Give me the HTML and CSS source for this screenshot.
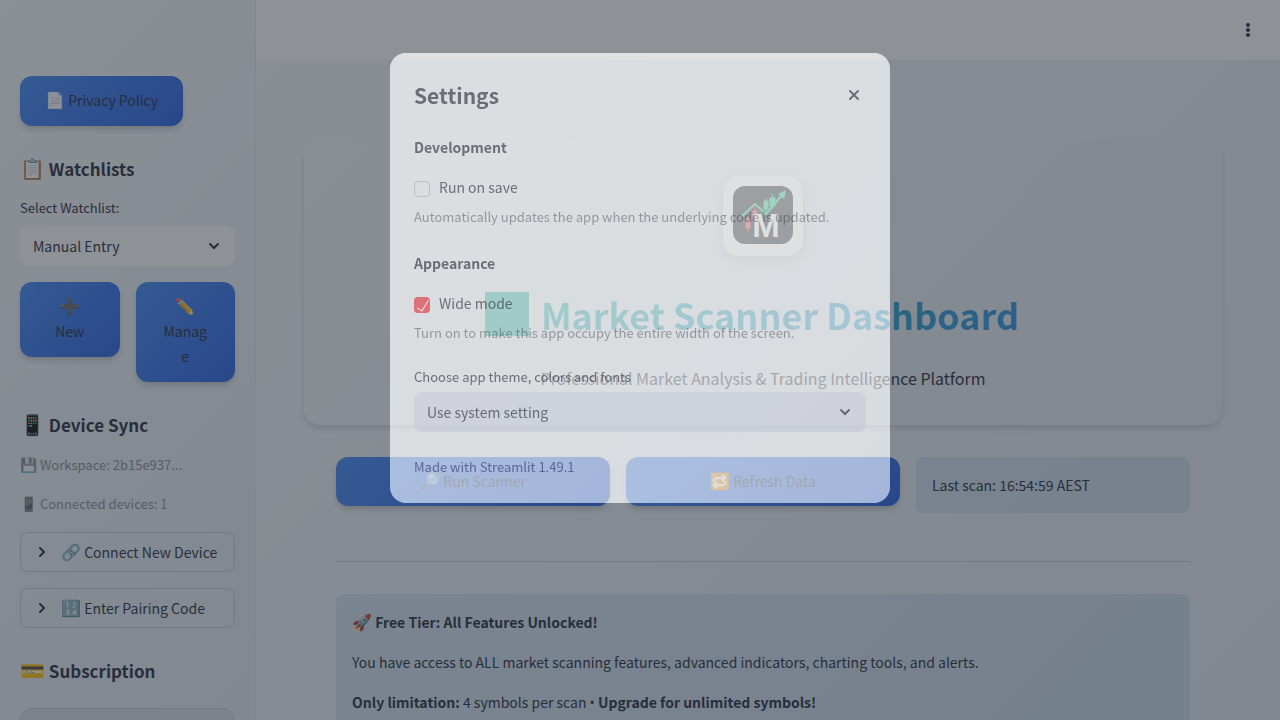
FILE: index.html
```html
<!DOCTYPE html>
<html lang="en">
<head>
<meta charset="utf-8">
<meta name="viewport" content="width=device-width, initial-scale=1">
<title>Market Scanner Dashboard</title>
<link rel="stylesheet" href="styles.css">
</head>
<body>
<div class="app">
  <aside class="sidebar">
    <button class="btn btn-fit" type="button"><span class="emoji">📄</span> Privacy Policy</button>

    <h2 class="side-title"><span class="emoji-lg">📋</span> Watchlists</h2>
    <label class="field-label" for="watchlist">Select Watchlist:</label>
    <div class="select-wrap">
      <select id="watchlist" class="select"><option>Manual Entry</option></select>
      <svg class="chevron" viewBox="0 0 16 16" aria-hidden="true"><path d="M4 6l4 4 4-4"/></svg>
    </div>
    <div class="side-actions">
      <button class="btn btn-narrow" type="button"><span class="emoji">➕</span> New</button>
      <button class="btn btn-narrow" type="button"><span class="emoji">✏️</span> Manage</button>
    </div>

    <h2 class="side-title"><span class="emoji-lg">📱</span> Device Sync</h2>
    <p class="caption"><span class="emoji-sm">💾</span> Workspace: 2b15e937...</p>
    <p class="caption"><span class="emoji-sm">📱</span> Connected devices: 1</p>
    <button class="expander" type="button">
      <svg class="arrow" viewBox="0 0 16 16" aria-hidden="true"><path d="M6 4l4 4-4 4"/></svg>
      <span><span class="emoji">🔗</span> Connect New Device</span>
    </button>
    <button class="expander" type="button">
      <svg class="arrow" viewBox="0 0 16 16" aria-hidden="true"><path d="M6 4l4 4-4 4"/></svg>
      <span><span class="emoji">🔢</span> Enter Pairing Code</span>
    </button>

    <h2 class="side-title"><span class="emoji-lg">💳</span> Subscription</h2>
    <div class="plan-card"></div>
  </aside>

  <div class="page">
    <header class="topbar">
      <button class="menu-btn" type="button" aria-label="Main menu">
        <svg viewBox="0 0 16 16" aria-hidden="true"><circle cx="8" cy="3" r="2"/><circle cx="8" cy="8" r="2"/><circle cx="8" cy="13" r="2"/></svg>
      </button>
    </header>
    <main class="content">
      <section class="hero">
        <div class="logo">
          <svg viewBox="0 0 60 58" role="img" aria-label="Market Scanner logo">
            <rect width="60" height="58" rx="12" fill="#05090f"/>
            <g fill="#e8343c" stroke="#e8343c">
              <path d="M15 29v17M21.500 21v15" stroke-width="1"/>
              <rect x="13" y="33" width="4" height="9"/><rect x="20" y="25" width="4" height="8"/>
            </g>
            <g fill="#10d488" stroke="#10d488">
              <path d="M27.500 27v11M33 12v15M39.500 8v15" stroke-width="1"/>
              <rect x="26" y="30" width="3" height="4"/><rect x="31" y="15" width="4" height="8"/><rect x="37" y="12" width="5" height="8"/>
            </g>
            <text class="logo-letter" x="33" y="51" text-anchor="middle">M</text>
            <path d="M8 31L22 18L33 28L48 10" fill="none" stroke="#10d488" stroke-width="2"/>
            <path d="M53 4L51 13L45 8Z" fill="#10d488"/>
          </svg>
        </div>
        <h1 class="hero-title"><span class="hero-mark"></span>Market Scanner Dashboard</h1>
        <p class="hero-sub">Professional Market Analysis &amp; Trading Intelligence Platform</p>
      </section>

      <div class="inner">
        <div class="actions">
          <button class="btn" type="button"><span class="emoji">🔎</span> Run Scanner</button>
          <button class="btn" type="button"><span class="emoji">🔁</span> Refresh Data</button>
          <p class="info">Last scan: 16:54:59 AEST</p>
        </div>
        <hr class="rule">
        <div class="info info-tier">
          <p><span class="emoji">🚀</span> <strong>Free Tier: All Features Unlocked!</strong></p>
          <p>You have access to ALL market scanning features, advanced indicators, charting tools, and alerts.</p>
          <p><strong>Only limitation:</strong> 4 symbols per scan <span class="bullet">•</span> <strong>Upgrade for unlimited symbols!</strong></p>
        </div>
      </div>
    </main>
  </div>
</div>

<div class="overlay">
  <div class="modal" role="dialog" aria-modal="true" aria-labelledby="modal-title">
    <div class="modal-head">
      <h2 class="modal-title" id="modal-title">Settings</h2>
      <button class="close-btn" type="button" aria-label="Close">
        <svg viewBox="0 0 16 16" aria-hidden="true"><path d="M4 4l8 8M12 4l-8 8"/></svg>
      </button>
    </div>
    <section class="group">
      <h3 class="group-title">Development</h3>
      <label class="check"><input type="checkbox">Run on save</label>
      <p class="hint">Automatically updates the app when the underlying code is updated.</p>
    </section>
    <section class="group">
      <h3 class="group-title">Appearance</h3>
      <label class="check"><input type="checkbox" checked>Wide mode</label>
      <p class="hint">Turn on to make this app occupy the entire width of the screen.</p>
    </section>
    <label class="theme-label" for="theme">Choose app theme, colors and fonts</label>
    <div class="select-wrap">
      <select id="theme" class="select select-theme"><option>Use system setting</option></select>
      <svg class="chevron chevron-soft" viewBox="0 0 16 16" aria-hidden="true"><path d="M4 6l4 4 4-4"/></svg>
    </div>
    <p class="version">Made with Streamlit 1.49.1</p>
  </div>
</div>
</body>
</html>
```

FILE: styles.css
```css
:root {
  --ink: #1b2233;
  --soft-ink: rgba(49, 51, 63, 0.66);
  --line: #c6c9d2;
}

* { box-sizing: border-box; }

body {
  margin: 0;
  height: 100vh;
  overflow: hidden;
  color: var(--ink);
  font-family: "Noto Sans CJK SC", "Noto Sans", sans-serif;
  font-size: 14px;
  line-height: 24px;
}

h1, h2, h3, p { margin: 0; }

button, select, input { font: inherit; color: inherit; }

button { cursor: pointer; }

.emoji { font-size: 16px; line-height: 16px; }
.emoji-sm { font-size: 14px; line-height: 14px; opacity: 0.6; }
.emoji-lg { font-size: 20px; line-height: 20px; }
.bullet { font-family: "Open Sans", sans-serif; }

.app {
  display: flex;
  height: 100vh;
  overflow: hidden;
  background: linear-gradient(135deg, #f8fafc 0%, #e2e8f0 100%);
}

/* Sidebar */
.sidebar {
  flex: none;
  width: 256px;
  padding: 76px 20px 0;
  border-right: 1px solid #e2e5ea;
  background: linear-gradient(135deg, #f8fafc 0%, #e2e8f0 100%);
  overflow: hidden;
}

.btn {
  padding: 12px 24px;
  border: 0;
  border-radius: 12px;
  background: linear-gradient(135deg, #3b82f6 0%, #1f5ae0 100%);
  box-shadow: 0 4px 6px -1px rgba(0, 0, 0, 0.2);
  line-height: 25px;
  overflow-wrap: anywhere;
}

.btn-fit {
  display: block;
  padding: 12px 25px 13px;
}

.btn-narrow { padding: 12px 26px 13px; }

.side-title {
  margin: 31px 0 17px;
  font-size: 17px;
  font-weight: 600;
  line-height: 24px;
  white-space: nowrap;
}

.field-label {
  display: block;
  margin-bottom: 8px;
  font-size: 13px;
  line-height: 20px;
}

.select-wrap { position: relative; }

.select {
  display: block;
  width: 100%;
  height: 40px;
  padding: 0 40px 0 13px;
  border: 0;
  border-radius: 8px;
  background: #fff;
  appearance: none;
}

.chevron {
  position: absolute;
  top: 12px;
  right: 13px;
  width: 16px;
  height: 16px;
  pointer-events: none;
}

.chevron path, .arrow path, .close-btn path {
  fill: none;
  stroke: var(--ink);
  stroke-width: 2;
  stroke-linecap: round;
}

.side-actions {
  display: grid;
  grid-template-columns: 1fr 1fr;
  align-items: start;
  gap: 16px;
  margin-top: 16px;
}

.caption {
  margin-bottom: 18px;
  color: #838892;
  font-size: 13px;
  line-height: 21px;
}

.expander {
  display: flex;
  align-items: center;
  gap: 11px;
  width: 100%;
  height: 40px;
  margin-bottom: 16px;
  padding: 0 13px;
  border: 1px solid var(--line);
  border-radius: 8px;
  background: none;
  white-space: nowrap;
}

.arrow { flex: none; width: 16px; height: 16px; }

.plan-card {
  height: 120px;
  margin-top: 25px;
  border: 1px solid var(--line);
  border-radius: 12px;
  background: #d9dce2;
}

/* Main column */
.page { flex: 1; min-width: 0; }

.topbar {
  display: flex;
  align-items: center;
  justify-content: flex-end;
  height: 60px;
  padding-right: 20px;
  background: #fff;
}

.menu-btn, .close-btn {
  display: flex;
  align-items: center;
  justify-content: center;
  width: 24px;
  height: 24px;
  padding: 0;
  border: 0;
  background: none;
}

.menu-btn svg { width: 16px; height: 16px; fill: var(--ink); }

.content { padding: 80px 58px 0 48px; }

.hero {
  display: flex;
  flex-direction: column;
  align-items: center;
  padding: 36px 32px 33px;
  border-radius: 16px;
  background: linear-gradient(135deg, #f5f8fb 0%, #e4e9f0 100%);
  box-shadow: 0 4px 6px -1px rgba(0, 0, 0, 0.16);
}

.logo {
  display: flex;
  justify-content: center;
  width: 80px;
  height: 80px;
  padding: 10px;
  border-radius: 16px;
  background: #fff;
  box-shadow: 0 4px 12px rgba(0, 0, 0, 0.15);
}

.logo svg { width: 60px; height: 58px; }

.logo-letter {
  fill: #fff;
  font-family: "Liberation Sans", sans-serif;
  font-size: 33px;
  font-weight: 700;
}

.hero-title {
  display: flex;
  align-items: center;
  justify-content: center;
  gap: 12px;
  align-self: stretch;
  margin-top: 30px;
  padding-right: 22px;
  background: linear-gradient(135deg, #10b98f 0%, #2f86f6 100%);
  background-clip: text;
  -webkit-background-clip: text;
  color: transparent;
  font-size: 36px;
  font-weight: 700;
  line-height: 56px;
  white-space: nowrap;
}

.hero-mark {
  width: 44px;
  height: 44px;
  background: #16aea0;
}

.hero-sub {
  margin-top: 22px;
  font-size: 16px;
  line-height: 28px;
}

.inner { padding: 32px 32px 0; }

.actions {
  display: grid;
  grid-template-columns: repeat(3, 1fr);
  align-items: start;
  gap: 16px;
}

.info {
  padding: 16px;
  border-radius: 8px;
  background: rgba(28, 110, 200, 0.12);
}

.rule {
  margin: 48px 0 32px;
  border: 0;
  border-top: 1px solid var(--line);
}

.info-tier {
  display: flex;
  flex-direction: column;
  gap: 16px;
}

/* Settings dialog */
.overlay {
  position: fixed;
  inset: 0;
  display: flex;
  align-items: flex-start;
  justify-content: center;
  padding-top: 53px;
  overflow: hidden;
}

.modal {
  width: 500px;
  padding: 24px 24px 26px;
  border-radius: 16px;
  background: rgba(210, 213, 216, 0.742);
  box-shadow: 0 0 0 1600px rgba(49, 57, 65, 0.55);
  color: var(--soft-ink);
}

.modal-head {
  display: flex;
  align-items: center;
  justify-content: space-between;
  margin-bottom: 22px;
}

.modal-title {
  font-size: 21px;
  font-weight: 600;
  line-height: 36px;
}

.close-btn svg { width: 16px; height: 16px; }
.close-btn path, .chevron-soft path { stroke: var(--soft-ink); }

.group { margin-bottom: 24px; }

.group-title {
  margin-bottom: 16px;
  font-size: 14px;
  font-weight: 600;
  line-height: 24px;
}

.check {
  display: flex;
  align-items: center;
  gap: 9px;
}

.check input {
  position: relative;
  width: 16px;
  height: 16px;
  margin: 3px 0 0;
  border: 1px solid rgba(49, 51, 63, 0.18);
  border-radius: 4px;
  appearance: none;
}

.check input:checked {
  border-color: transparent;
  background: rgba(222, 84, 92, 0.8);
  background-clip: border-box;
}

.check input:checked::after {
  content: "";
  position: absolute;
  top: 0;
  left: 5px;
  width: 5px;
  height: 12px;
  border: solid #f2e4e6;
  border-width: 0 1px 1px 0;
  transform: rotate(32deg);
}

.hint {
  margin-top: 8px;
  color: rgba(49, 51, 63, 0.42);
  font-size: 13px;
  line-height: 20px;
}

.theme-label {
  display: block;
  margin-bottom: 5px;
  font-size: 13px;
  line-height: 20px;
}

.select-theme { background: rgba(185, 190, 215, 0.35); }

.version {
  margin-top: 25px;
  color: rgba(40, 50, 105, 0.62);
  font-size: 13px;
  line-height: 20px;
}
```
